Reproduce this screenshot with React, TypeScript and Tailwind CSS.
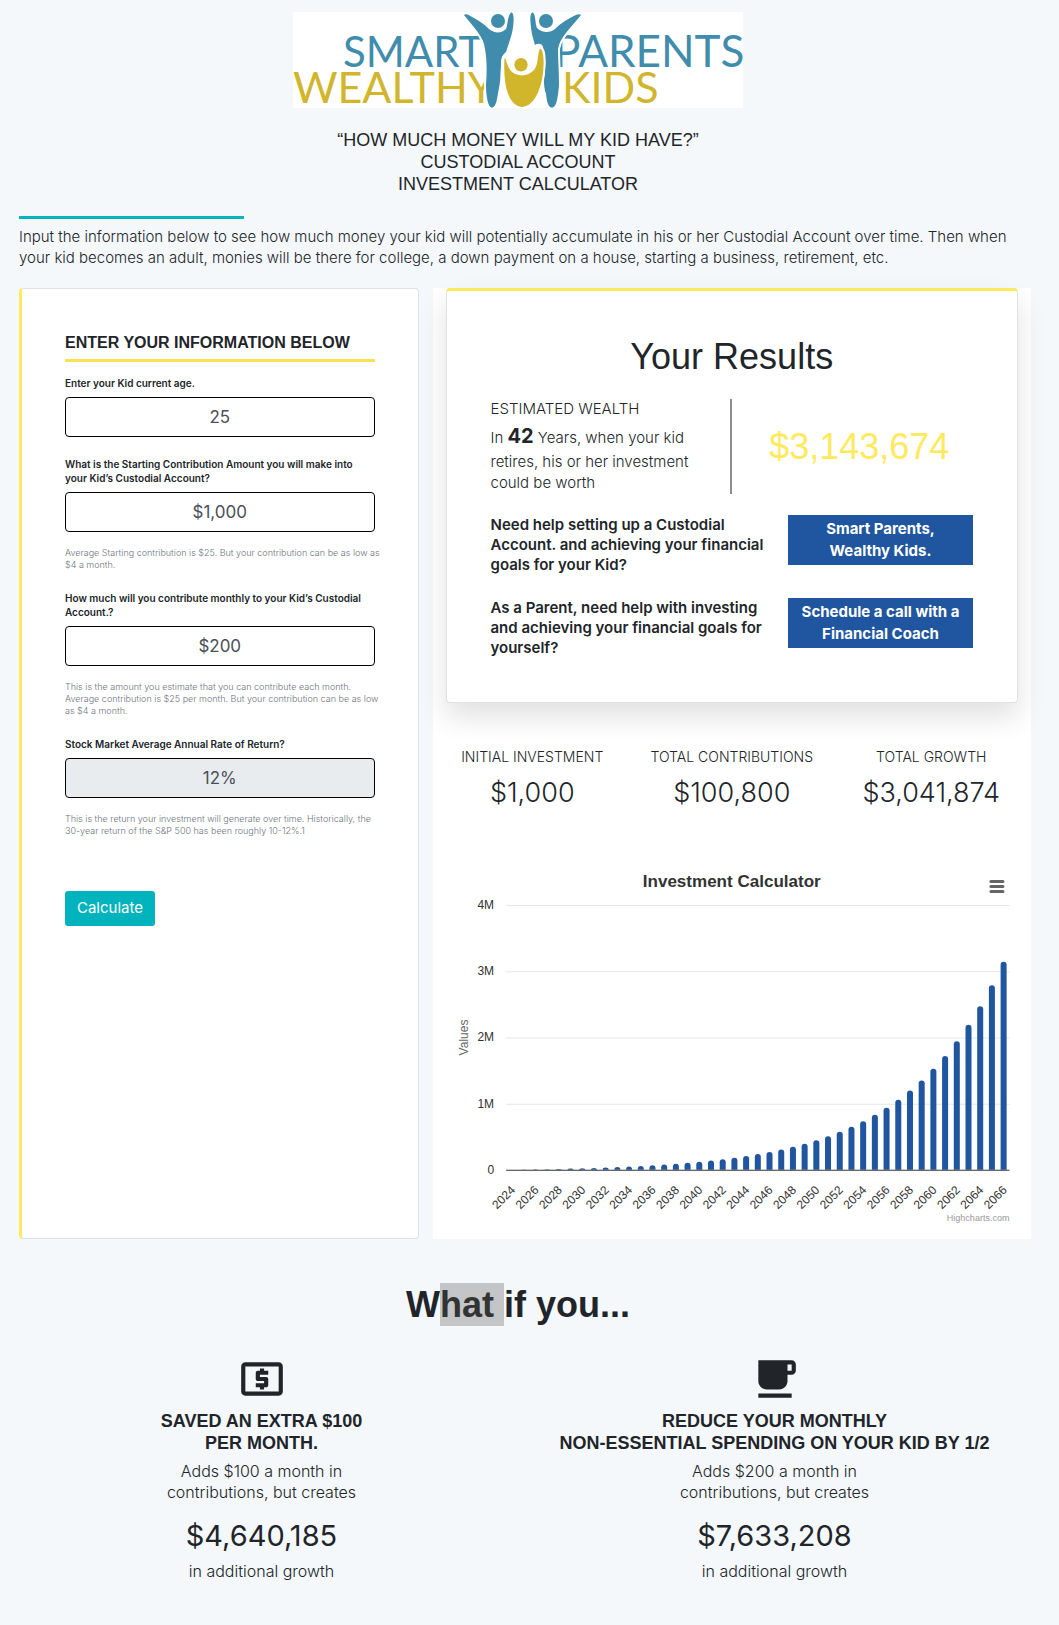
import React, { useState } from "react";
import { MdLocalAtm, MdLocalCafe } from "react-icons/md";

const BLUE = "#20569f";

function Logo() {
  return (
    <svg viewBox="0 0 450 96" className="h-24 w-[450px] bg-white" role="img" aria-label="Smart Parents Wealthy Kids">
      <g fontFamily="Lato, sans-serif" fontSize="43">
        <g fill="#3f8cac">
          <text x="50" y="55" fontSize="42">SMART</text>
          <text x="261" y="55" fontSize="44">PARENTS</text>
        </g>
        <g fill="#d1b52b">
          <text x="0" y="91">WEALTHY</text>
          <text x="269" y="91">KIDS</text>
        </g>
      </g>
      <g stroke="#fff" strokeWidth="4" paintOrder="stroke">
        <path
          fill="#3f8cac"
          d="M171 3C173 1 177 4 181 6C188 10 192 13 196 17C201 21 208 22 213 17C215 13 214 5 218 .6C220 0 221 4 220.5 10C220 22 216 30 213 40C208 44 208 48 208 54C207 63 208 67 206 76C204 85 204 95 198.700 95.800C195 95 193 84 193 73C194 60 194 48 192 37C191 25 182 17 171 3Z"
        />
        <path
          fill="#3f8cac"
          d="M288 3C286 1 281 4 277 6C270 10 266 13 262 17C257 21 249 21 244 16C242 12 243 4 240 .6C238 0 237 4 237.500 10C238 20 240 26 242 33C245 31 249 31 250 35C252 44 253 50 252 58C251 66 250 72 253 82C254 90 255 95 259 95.800C264 95 265 84 266 73C266 60 265 48 265 37C267 25 277 17 288 3Z"
        />
        <path
          fill="#d1b52b"
          d="M211.500 46C213 46 214 54 218 59C224 65 235 65 241 58C246 52 244 42 247 36.500C250 37 251 46 250.500 54C250 72 243 94 229 95C215 94 210 72 211.500 46Z"
        />
      </g>
      <g fill="#3f8cac">
        <circle cx="205" cy="9" r="7" />
        <circle cx="253" cy="9" r="7" />
        <circle cx="228" cy="52.700" r="6.700" fill="#d1b52b" />
      </g>
    </svg>
  );
}

type FieldProps = {
  id: string;
  label: string;
  value: string;
  onChange?: (v: string) => void;
  help?: string;
  className?: string;
};

function Field({ id, label, value, onChange, help, className = "" }: FieldProps) {
  return (
    <div className={className}>
      <label htmlFor={id} className="block text-[10px] leading-[14px] font-semibold">
        {label}
      </label>
      <input
        id={id}
        type="text"
        value={value}
        disabled={!onChange}
        onChange={(e) => onChange?.(e.target.value)}
        className="mt-[7px] block h-10 w-full rounded border border-black bg-white px-3 text-center text-[17px] text-[#495057] disabled:bg-[#e9ecef]"
      />
      {help && <p className="mt-[15px] -mr-2 text-[9px] leading-[12px] text-[#6c757d] font-light">{help}</p>}
    </div>
  );
}

function balance(years: number) {
  const growth = Math.pow(1.01, years * 12);
  return 1000 * growth + (200 * (growth - 1)) / 0.01;
}

function Chart() {
  const left = 60;
  const right = 562;
  const base = 310;
  const unit = 66;
  const step = (right - left) / 43;
  const bars = Array.from({ length: 43 }, (_, i) => ({ year: 2024 + i, value: balance(i) / 1e6 }));
  return (
    <svg viewBox="0 0 571 372" className="block h-auto w-full" fontFamily="'Liberation Sans', Arial, sans-serif" role="img" aria-label="Investment Calculator">
      <text x="285" y="28" textAnchor="middle" fontSize="17" fontWeight="700" fill="#333">
        Investment Calculator
      </text>
      <g stroke="#666" strokeWidth="3" strokeLinecap="round">
        <path d="M543.500 22.500h12M543.500 27.500h12M543.500 32.500h12" />
      </g>
      {[1, 2, 3, 4].map((n) => (
        <path key={n} d={`M${left} ${base - n * unit + 0.5}H${right}`} stroke="#e6e6e6" />
      ))}
      {[0, 1, 2, 3, 4].map((n) => (
        <text key={n} x="48" y={base - n * unit + 4} textAnchor="end" fontSize="12" fill="#333">
          {n === 0 ? "0" : `${n}M`}
        </text>
      ))}
      <text transform="translate(22 178) rotate(-90)" textAnchor="middle" fontSize="12" fill="#666">
        Values
      </text>
      {bars.map((b, i) => {
        const x = left + step * (i + 0.5) - 3;
        const h = b.value * unit;
        const r = Math.min(3, h);
        return (
          <path
            key={b.year}
            fill={BLUE}
            d={`M${x} ${base}V${base - h + r}q0 ${-r} 3 ${-r}q3 0 3 ${r}V${base}Z`}
          />
        );
      })}
      <path d={`M${left} ${base + 0.5}H${right}`} stroke="#333" />
      {bars
        .filter((_, i) => i % 2 === 0)
        .map((b, i) => (
          <text
            key={b.year}
            transform={`translate(${left + step * (i * 2 + 0.5) + 4} 331) rotate(-45)`}
            textAnchor="end"
            fontSize="12"
            fill="#333"
          >
            {b.year}
          </text>
        ))}
      <text x={right} y="361" textAnchor="end" fontSize="9" fill="#999">
        Highcharts.com
      </text>
    </svg>
  );
}

function Stat({ label, value }: { label: string; value: string }) {
  return (
    <div className="text-center font-light">
      <p className="text-sm leading-[21px] whitespace-nowrap">{label}</p>
      <p className="mt-2 text-[27px] leading-[36px]">{value}</p>
    </div>
  );
}

function Advice({ text, action, className = "" }: { text: string; action: React.ReactNode; className?: string }) {
  return (
    <div className={`flex items-start justify-between ${className}`}>
      <p className="w-[284px] text-[15px] leading-5 font-semibold">{text}</p>
      <a href="#" className="flex w-[185px] items-center justify-center bg-[#20569f] px-1 py-[3px] text-center text-[15px] leading-[22px] font-bold text-white">
        {action}
      </a>
    </div>
  );
}

function Scenario({ icon, title, monthly, value }: { icon: React.ReactNode; title: React.ReactNode; monthly: string; value: string }) {
  return (
    <div className="flex flex-col items-center text-center">
      {icon}
      <h3 className="mt-[6px] font-['Liberation_Sans',Arial,sans-serif] text-lg leading-[22px] font-bold">{title}</h3>
      <p className="mt-[7px] text-base leading-[21px] font-light">
        Adds {monthly} a month in
        <br />
        contributions, but creates
      </p>
      <p className="mt-[15px] text-[29px] leading-[36px]">{value}</p>
      <p className="mt-[7px] text-base leading-[21px] font-light">in additional growth</p>
    </div>
  );
}

export default function App() {
  const [age, setAge] = useState("25");
  const [start, setStart] = useState("$1,000");
  const [monthly, setMonthly] = useState("$200");

  return (
    <main className="min-h-screen bg-[#f4f8fb] pt-3 pr-7 pb-10 pl-[5px] font-[Inter,sans-serif] text-[#212529]">
      <header className="flex flex-col items-center">
        <Logo />
        <h1 className="mt-[21px] text-center font-['Liberation_Sans',Arial,sans-serif] text-lg leading-[22px]">
          “HOW MUCH MONEY WILL MY KID HAVE?”
          <br />
          CUSTODIAL ACCOUNT
          <br />
          INVESTMENT CALCULATOR
        </h1>
      </header>
      <div className="px-3.5">
        <div className="mt-[21px] h-[3px] w-[225px] bg-[#00b3bd]" />
        <p className="mt-[7px] text-[15px] leading-[21px] font-light">
          Input the information below to see how much money your kid will potentially accumulate in his or her Custodial Account over time. Then when
          your kid becomes an adult, monies will be there for college, a down payment on a house, starting a business, retirement, etc.
        </p>
      </div>

      <div className="mt-5 grid grid-cols-12">
        <div className="col-span-5 px-3.5">
          <form className="h-full rounded border border-l-[3px] border-[#dee2e6] border-l-[#ffe95c] bg-white px-[43px] pt-11" onSubmit={(e) => e.preventDefault()}>
            <h2 className="border-b-[3px] border-[#ffe14f] pb-[6px] font-['Liberation_Sans',Arial,sans-serif] text-base leading-5 font-bold whitespace-nowrap">
              ENTER YOUR INFORMATION BELOW
            </h2>
            <Field className="mt-[14px]" id="age" label="Enter your Kid current age." value={age} onChange={setAge} />
            <Field
              className="mt-5"
              id="start"
              label="What is the Starting Contribution Amount you will make into your Kid’s Custodial Account?"
              value={start}
              onChange={setStart}
              help="Average Starting contribution is $25. But your contribution can be as low as $4 a month."
            />
            <Field
              className="mt-5"
              id="monthly"
              label="How much will you contribute monthly to your Kid’s Custodial Account.?"
              value={monthly}
              onChange={setMonthly}
              help="This is the amount you estimate that you can contribute each month. Average contribution is $25 per month. But your contribution can be as low as $4 a month."
            />
            <Field
              className="mt-5"
              id="rate"
              label="Stock Market Average Annual Rate of Return?"
              value="12%"
              help="This is the return your investment will generate over time. Historically, the 30-year return of the S&P 500 has been roughly 10-12%.1"
            />
            <button type="submit" className="mt-[54px] h-[35px] w-[90px] rounded-[3px] bg-[#00b3bd] text-[15px] text-white">
              Calculate
            </button>
          </form>
        </div>

        <div className="col-span-7 bg-white pb-[7px]">
          <div className="px-[13px]">
            <section className="rounded border border-t-[3px] border-[#dee2e6] border-t-[#ffe95c] bg-white px-11 py-11 shadow-[0_14px_28px_rgba(0,0,0,0.12)]">
              <h2 className="text-center font-['Liberation_Sans',Arial,sans-serif] text-[36px] leading-[44px]">Your Results</h2>
              <div className="mt-5 flex">
                <div className="h-[95px] w-[241px] border-r-2 border-[#8c8c8c] text-[15px] font-light">
                  <p className="leading-5">ESTIMATED WEALTH</p>
                  <p className="leading-[21px]">
                    <span className="block pt-1 leading-[27px]">
                      In <strong className="text-xl leading-[27px] font-bold">42</strong> Years, when your kid
                    </span>
                    retires, his or her investment could be worth
                  </p>
                </div>
                <div className="flex flex-1 items-center justify-center pl-3.5 font-['Liberation_Sans',Arial,sans-serif] text-[36px] text-[#ffe95c]">
                  $3,143,674
                </div>
              </div>
              <Advice
                className="mt-[21px]"
                text="Need help setting up a Custodial Account. and achieving your financial goals for your Kid?"
                action={
                  <>
                    Smart Parents,
                    <br />
                    Wealthy Kids.
                  </>
                }
              />
              <Advice className="mt-[23px]" text="As a Parent, need help with investing and achieving your financial goals for yourself?" action="Schedule a call with a Financial Coach" />
            </section>
          </div>
          <div className="mt-[43px] grid grid-cols-3">
            <Stat label="INITIAL INVESTMENT" value="$1,000" />
            <Stat label="TOTAL CONTRIBUTIONS" value="$100,800" />
            <Stat label="TOTAL GROWTH" value="$3,041,874" />
          </div>
          <div className="mt-12 px-[13px]">
            <Chart />
          </div>
        </div>
      </div>

      <h2 className="mt-11 text-center font-['Liberation_Sans',Arial,sans-serif] text-[36px] leading-[43px] font-bold">
        W<span className="bg-[#c4c5c7] py-px text-[#333]">hat </span>if you...
      </h2>
      <div className="mt-7 grid grid-cols-2">
        <Scenario
          icon={<MdLocalAtm size={50} />}
          title={
            <>
              SAVED AN EXTRA $100
              <br />
              PER MONTH.
            </>
          }
          monthly="$100"
          value="$4,640,185"
        />
        <Scenario
          icon={<MdLocalCafe size={50} />}
          title={
            <>
              REDUCE YOUR MONTHLY
              <br />
              NON-ESSENTIAL SPENDING ON YOUR KID BY 1/2
            </>
          }
          monthly="$200"
          value="$7,633,208"
        />
      </div>
    </main>
  );
}
